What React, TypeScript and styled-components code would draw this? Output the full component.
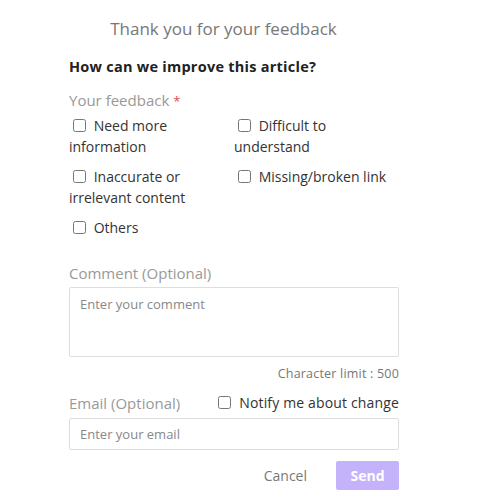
import React from "react";
import styled, { createGlobalStyle } from "styled-components";

const Global = createGlobalStyle`
  html, body { margin: 0; padding: 0; background: #ffffff; }
  body { font-family: "Open Sans", "Noto Sans", sans-serif; }
  * { box-sizing: border-box; }
`;

const Page = styled.div`
  padding: 17px 0 0 69px;
`;

const Form = styled.form`
  width: 330px;
  display: flex;
  flex-direction: column;
`;

const Title = styled.h2`
  margin: 0 0 16px;
  padding-right: 21px;
  text-align: center;
  font-size: 17px;
  line-height: 24px;
  font-weight: 400;
  color: #777777;
`;

const Heading = styled.h3`
  margin: 0 0 13px;
  font-size: 14.5px;
  line-height: 20px;
  letter-spacing: 0.25px;
  font-weight: 700;
  color: #222222;
`;

const Label = styled.div<{ $gap?: number }>`
  font-size: 15px;
  line-height: 20px;
  color: #999999;
  margin-bottom: ${(p) => p.$gap ?? 4}px;
`;

const Req = styled.span`
  color: #e5484d;
  font-size: 13px;
  line-height: 0;
`;

const Options = styled.div`
  display: grid;
  grid-template-columns: 165px 165px;
  row-gap: 9px;
  margin-bottom: 25px;
`;

const Option = styled.label`
  font-size: 14px;
  line-height: 21px;
  color: #333333;
  cursor: pointer;
`;

const Box = styled.input.attrs({ type: "checkbox" })`
  width: 13px;
  height: 13px;
  margin: 0 4px 0 4px;
  vertical-align: -1px;
`;

const TextArea = styled.textarea`
  width: 330px;
  height: 70px;
  padding: 7px 10px;
  border: 1px solid #dddddd;
  border-radius: 2px;
  resize: none;
  font-family: inherit;
  font-size: 13px;
  line-height: 18px;
  color: #333;
  &::placeholder { color: #888888; }
`;

const Limit = styled.div`
  margin: 9px 0 11px;
  text-align: right;
  font-size: 12.5px;
  letter-spacing: 0.2px;
  line-height: 16px;
  color: #777777;
`;

const EmailRow = styled.div`
  display: flex;
  justify-content: space-between;
  align-items: center;
  margin-bottom: 5px;
`;

const Notify = styled.label`
  font-size: 14px;
  line-height: 20px;
  letter-spacing: 0.15px;
  color: #333333;
`;

const Input = styled.input`
  width: 330px;
  height: 32px;
  padding: 0 10px;
  border: 1px solid #dddddd;
  border-radius: 2px;
  font-family: inherit;
  font-size: 13px;
  color: #333;
  &::placeholder { color: #888888; }
`;

const Actions = styled.div`
  display: flex;
  justify-content: flex-end;
  align-items: center;
  gap: 29px;
  margin-top: 11px;
`;

const Cancel = styled.button`
  border: none;
  background: none;
  padding: 0;
  font-family: inherit;
  font-size: 14px;
  color: #777777;
  cursor: pointer;
`;

const Send = styled.button`
  width: 63px;
  height: 29px;
  border: none;
  border-radius: 2px;
  background: #c4b2fb;
  color: #ffffff;
  font-family: inherit;
  font-size: 14px;
  font-weight: 700;
`;

const options = [
  "Need more information",
  "Difficult to understand",
  "Inaccurate or irrelevant content",
  "Missing/broken link",
  "Others",
];

export default function App() {
  return (
    <Page>
      <Global />
      <Form onSubmit={(e) => e.preventDefault()}>
        <Title>Thank you for your feedback</Title>
        <Heading>How can we improve this article?</Heading>
        <Label $gap={5}>
          Your feedback <Req>*</Req>
        </Label>
        <Options>
          {options.map((o) => (
            <Option key={o}>
              <Box />
              {" "}
              {o}
            </Option>
          ))}
        </Options>
        <Label>Comment (Optional)</Label>
        <TextArea placeholder="Enter your comment" />
        <Limit>Character limit : 500</Limit>
        <EmailRow>
          <Label $gap={0}>Email (Optional)</Label>
          <Notify>
            <Box />
            {" "}Notify me about change
          </Notify>
        </EmailRow>
        <Input placeholder="Enter your email" />
        <Actions>
          <Cancel type="button">Cancel</Cancel>
          <Send type="submit">Send</Send>
        </Actions>
      </Form>
    </Page>
  );
}
